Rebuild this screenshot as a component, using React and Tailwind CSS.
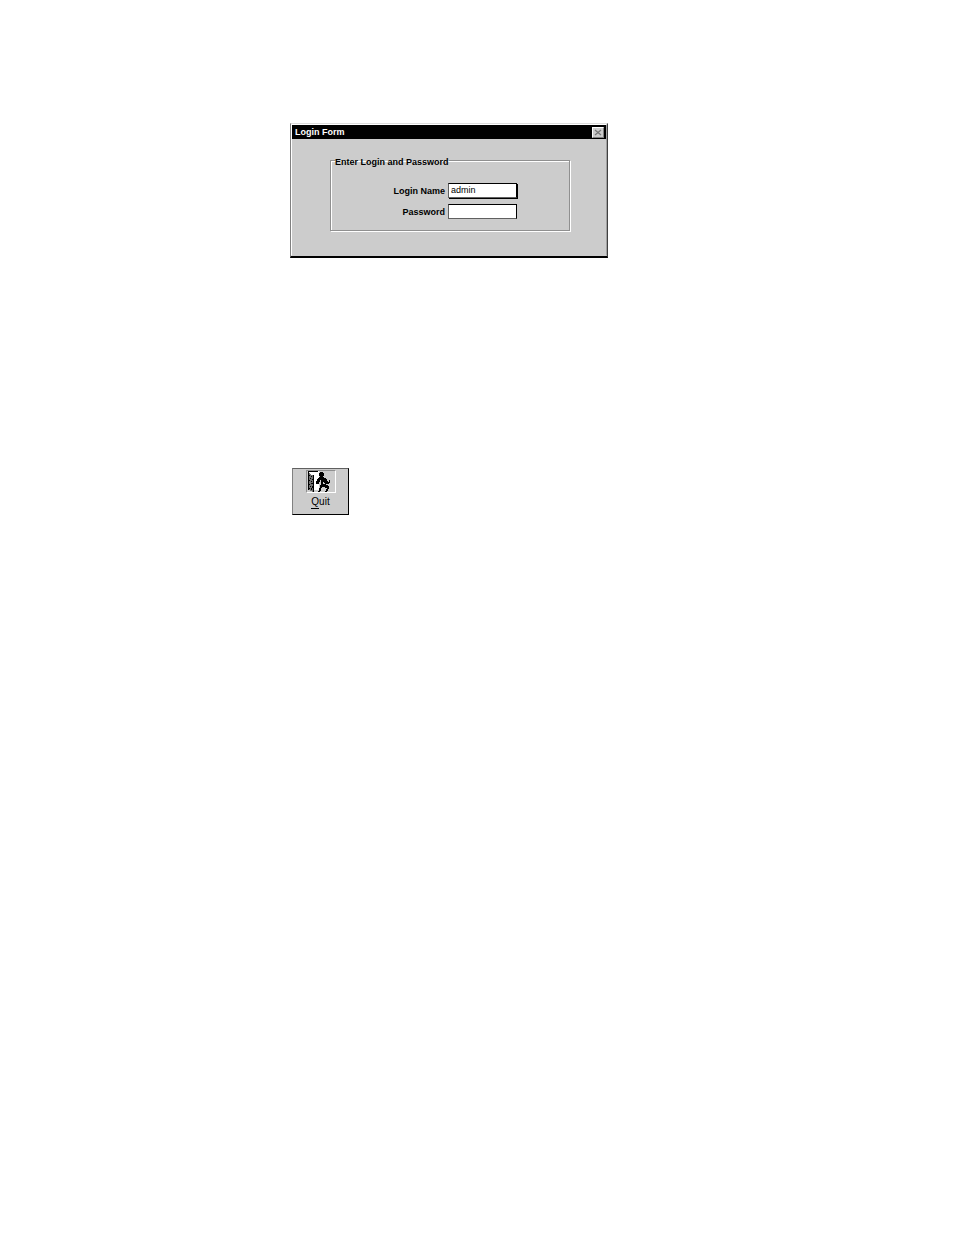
import { useState } from "react";

const QuitIcon = () => (
  <svg width="28" height="21" viewBox="0 0 28 21" shapeRendering="crispEdges" aria-hidden="true">
    <path d="M2 0h10v19H2z" fill="#fff" />
    <path d="M2 0h9v1H2zM1 0h1v19H1z" fill="#000" />
    <path d="M2 2h1v1h1v1h2v1h1v16H5v-1H3v-1H2z" fill="#707070" />
    <path
      d="M2 4h1v1H2zM4 5h1v1H4zM3 7h1v1H3zM5 8h1v1H5zM2 9h1v1H2zM4 10h1v1H4zM4 12h2v1H4zM2 13h1v1H2zM3 15h1v1H3zM5 15h1v2H5zM2 17h1v1H2zM4 17h1v2H4zM6 4h1v17H6z"
      fill="#000"
    />
    <path d="M13 1h3v1h1v3h-1v1h-3V5h-1V2h1z" fill="#000" />
    <path
      d="M11 6h6v1h2v1h1v2h1v1h1V9h1v3h-1v1h-4v-1h-1v-1h-1v2h3v1h2v1h1v3h-1v2h-1v1h-2v-1h1v-2h1v-1h-2v-1h-3v1h-1v3h-1v2h-2v-2h1v-3h1v-3h1V9h-1v2h-1v2H9v-3h1V8h1V7h1z"
      fill="#000"
    />
  </svg>
);

const TextField = ({ id, label, focused, ...props }) => (
  <div className="flex items-center justify-end gap-[3px]">
    <label htmlFor={id} className="text-[9px] leading-3 font-bold">
      {label}
    </label>
    <input
      id={id}
      className={`h-[15px] w-[69px] border border-t-black border-r-black border-b-[#606060] border-l-[#606060] bg-white px-0.5 pb-0.5 text-[9px] leading-3 outline-none ${
        focused ? "shadow-[1px_1px_0_#000]" : ""
      }`}
      {...props}
    />
  </div>
);

const LoginForm = () => {
  const [login, setLogin] = useState("admin");
  const [password, setPassword] = useState("");

  return (
    <section className="w-full max-w-[318px] border-t border-r border-b-2 border-l border-t-[#dcdcdc] border-r-[#404040] border-b-black border-l-[#808080] bg-[#cccccc]">
      <div className="border border-t-white border-r-[#a0a0a0] border-b-[#cccccc] border-l-white pb-6">
        <header className="flex h-3.5 items-center justify-between bg-black pr-0.5 pl-[3px]">
          <h1 className="text-[9px] leading-3 font-bold text-white">Login Form</h1>
          <button
            type="button"
            aria-label="Close"
            className="flex h-[11px] w-3 items-center justify-center border border-t-white border-r-[#808080] border-b-[#808080] border-l-white bg-[#cccccc]"
          >
            <svg width="8" height="7" viewBox="0 0 8 7" aria-hidden="true">
              <path d="M1 1l6 5M7 1L1 6" stroke="#777" strokeWidth="1.2" />
            </svg>
          </button>
        </header>
        <form className="mt-[13px] mr-9 ml-[38px]">
          <fieldset className="border border-[#909090] pr-[52px] pb-[11px] pl-1 shadow-[1px_1px_0_#fff,inset_1px_1px_0_#fff]">
            <legend className="pt-1 text-[9px] leading-3 font-bold">Enter Login and Password</legend>
            <div className="flex flex-col gap-1.5 pt-[15px]">
              <TextField
                id="login"
                label="Login Name"
                focused
                value={login}
                onChange={(e) => setLogin(e.target.value)}
              />
              <TextField
                id="password"
                label="Password"
                type="password"
                value={password}
                onChange={(e) => setPassword(e.target.value)}
              />
            </div>
          </fieldset>
        </form>
      </div>
    </section>
  );
};

const QuitButton = () => (
  <button
    type="button"
    className="mt-[210px] ml-0.5 flex h-[47px] w-[57px] flex-col items-center gap-[3px] border border-t-[#606060] border-r-black border-b-black border-l-[#808080] bg-[#cccccc] pt-px"
  >
    <span className="border border-t-[#909090] border-r-white border-b-white border-l-[#909090]">
      <QuitIcon />
    </span>
    <span className="flex text-[10px] leading-3">
      <span className="border-b border-black">Q</span>uit
    </span>
  </button>
);

const App = () => {
  return (
    <main className="min-h-screen bg-white pt-[123px] pr-6 pl-[290px] font-['Liberation_Sans',sans-serif] text-black">
      <LoginForm />
      <QuitButton />
    </main>
  );
};

export default App;
